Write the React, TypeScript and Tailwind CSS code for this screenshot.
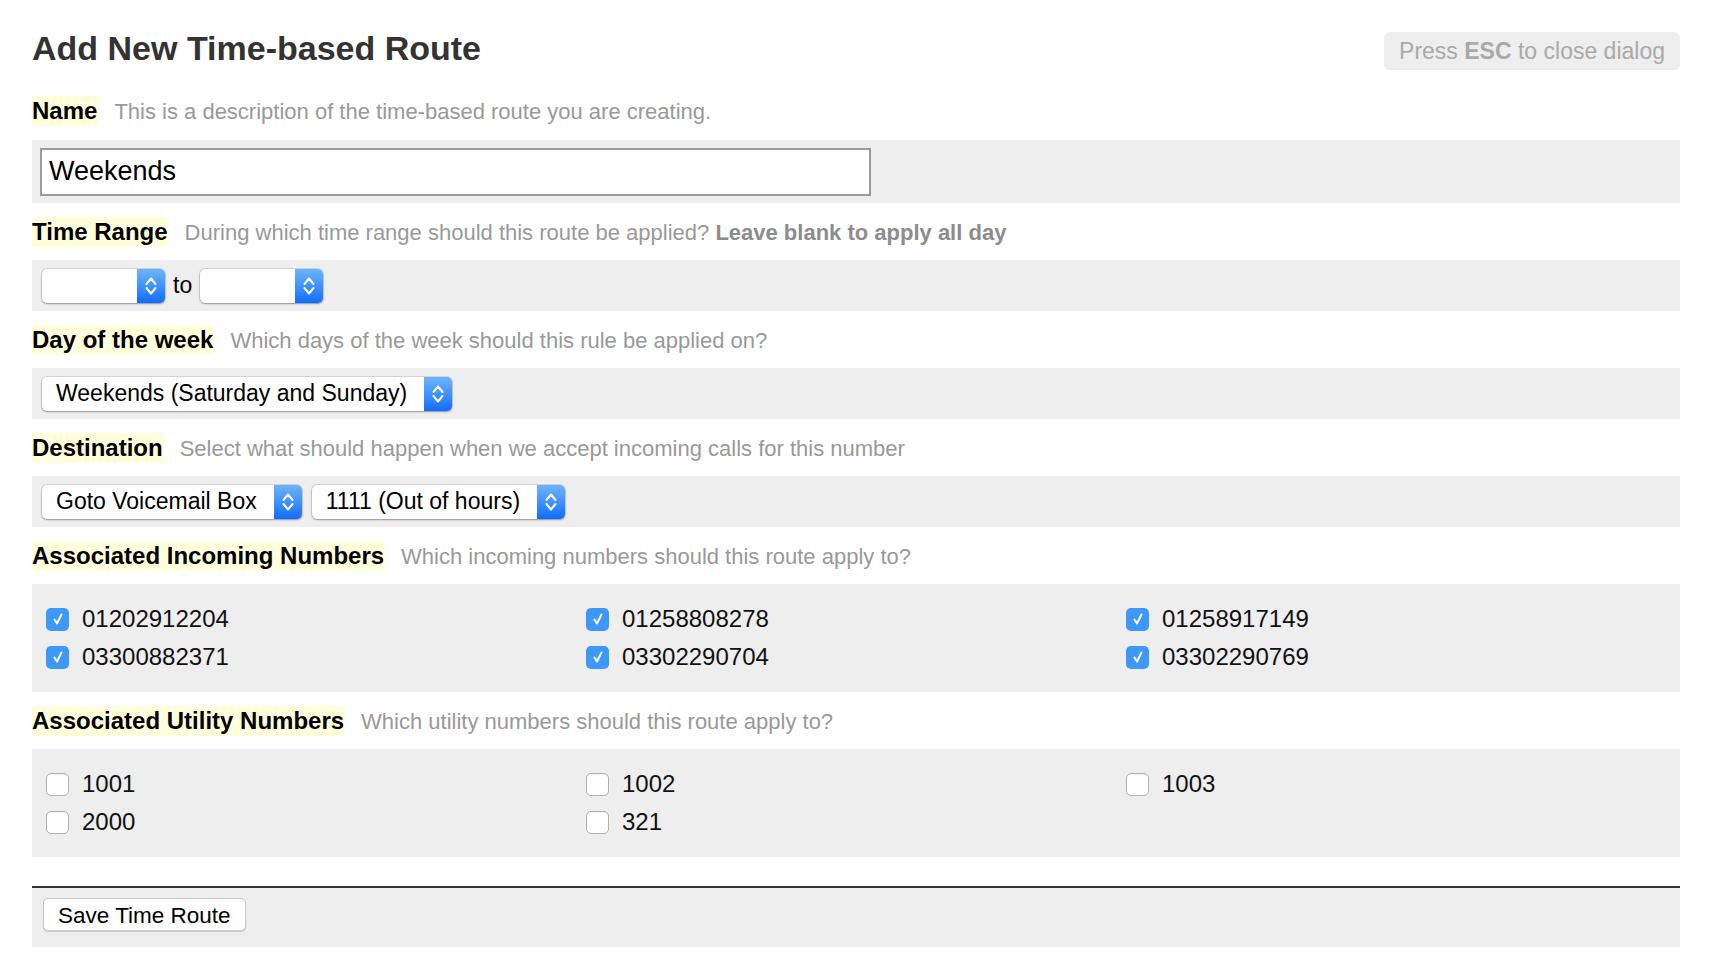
import React from 'react';

const incoming = ['01202912204', '01258808278', '01258917149', '03300882371', '03302290704', '03302290769'];
const utility = ['1001', '1002', '1003', '2000', '321'];

function Chevrons() {
  return (
    <svg width="14" height="24" viewBox="0 0 14 24" fill="none" stroke="white" strokeWidth="2" strokeLinecap="round" strokeLinejoin="round">
      <path d="M2.5 10 L7 4.5 L11.5 10" />
      <path d="M2.5 14 L7 19.5 L11.5 14" />
    </svg>
  );
}

function Select({ value, width }: { value: string; width?: string }) {
  return (
    <div className={`flex h-[34px] items-stretch rounded-[5px] bg-white shadow-[0_0_0_1px_rgba(0,0,0,0.1),0_1px_2px_rgba(0,0,0,0.3)] ${width ?? ''}`}>
      <div className="flex flex-1 items-center pl-[14px] pr-[17px] text-[23px] text-black whitespace-nowrap">{value}</div>
      <div className="flex w-[28px] items-center justify-center rounded-r-[5px] bg-gradient-to-b from-[#6db4fb] to-[#0b6bfe]">
        <Chevrons />
      </div>
    </div>
  );
}

function Checkbox({ label, checked }: { label: string; checked?: boolean }) {
  return (
    <label className="flex h-[38px] items-center gap-[13px]">
      {checked ? (
        <span className="flex h-[23px] w-[23px] items-center justify-center rounded-[5px] bg-[#3d98f8]">
          <svg width="14" height="14" viewBox="0 0 14 14" fill="none" stroke="white" strokeWidth="2" strokeLinecap="round" strokeLinejoin="round">
            <path d="M3.5 7.5 L6 11.5 L10.5 2.5" />
          </svg>
        </span>
      ) : (
        <span className="h-[23px] w-[23px] rounded-[5px] border border-[#b0b0b0] bg-white shadow-[inset_0_1px_1px_rgba(0,0,0,0.05)]" />
      )}
      <span className="text-[24px] text-[#111]">{label}</span>
    </label>
  );
}

function Label({ title, children, first }: { title: string; children: React.ReactNode; first?: boolean }) {
  return (
    <div className={`${first ? 'mt-[28px]' : 'mt-[14px]'} flex h-[30px] items-baseline gap-[16px]`}>
      <span className="bg-[#ffffdc] pr-[1px] text-[24px] font-bold leading-[30px] text-black">{title}</span>
      <span className="text-[22px] leading-[30px] text-[#999]">{children}</span>
    </div>
  );
}

export default function App() {
  return (
    <div className="min-h-screen bg-white pl-[32px] pr-[30px] pt-[28px]" style={{ fontFamily: '"Liberation Sans", Arial, Helvetica, sans-serif' }}>
      <div className="flex h-[40px] items-start justify-between">
        <h1 className="text-[34px] font-bold leading-[40px] text-[#333]">Add New Time-based Route</h1>
        <div className="mt-[4px] flex h-[38px] items-center rounded-[6px] bg-[#eee] px-[15px] text-[23px] text-[#aaa]">
          Press&nbsp;<b>ESC</b>&nbsp;to close dialog
        </div>
      </div>

      <Label title="Name" first>This is a description of the time-based route you are creating.</Label>
      <div className="mt-[14px] flex h-[63px] items-center bg-[#eee] px-[8px]">
        <div className="flex h-[48px] w-[831px] items-center border-2 border-[#9b9b9b] bg-white px-[7px] text-[27px] text-black">Weekends</div>
      </div>

      <Label title="Time Range">
        During which time range should this route be applied? <b className="text-[#8c8c8c]">Leave blank to apply all day</b>
      </Label>
      <div className="mt-[13px] flex h-[51px] items-center gap-[8px] bg-[#eee] pl-[10px]">
        <Select value="" width="w-[123px]" />
        <span className="text-[23px] text-black">to</span>
        <Select value="" width="w-[123px]" />
      </div>

      <Label title="Day of the week">Which days of the week should this rule be applied on?</Label>
      <div className="mt-[13px] flex h-[51px] items-center bg-[#eee] pl-[10px]">
        <Select value="Weekends (Saturday and Sunday)" />
      </div>

      <Label title="Destination">Select what should happen when we accept incoming calls for this number</Label>
      <div className="mt-[13px] flex h-[51px] items-center gap-[10px] bg-[#eee] pl-[10px]">
        <Select value="Goto Voicemail Box" />
        <Select value="1111 (Out of hours)" />
      </div>

      <Label title="Associated Incoming Numbers">Which incoming numbers should this route apply to?</Label>
      <div className="mt-[13px] grid h-[108px] grid-cols-3 content-center bg-[#eee] px-[14px]">
        {incoming.map((n) => (
          <Checkbox key={n} label={n} checked />
        ))}
      </div>

      <Label title="Associated Utility Numbers">Which utility numbers should this route apply to?</Label>
      <div className="mt-[13px] grid h-[108px] grid-cols-3 content-center bg-[#eee] px-[14px]">
        {utility.map((n) => (
          <Checkbox key={n} label={n} />
        ))}
      </div>

      <div className="mt-[29px] border-t-2 border-[#333] bg-[#eee] pb-[16px] pl-[11px] pt-[10px]">
        <button className="h-[33px] rounded-[5px] border border-[#c8c8c8] bg-white px-[14px] text-[22.5px] text-black shadow-[0_1px_1px_rgba(0,0,0,0.15)]">
          Save Time Route
        </button>
      </div>
    </div>
  );
}
